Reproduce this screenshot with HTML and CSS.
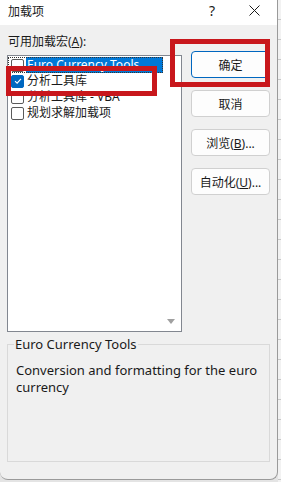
FILE: index.html
```html
<!DOCTYPE html>
<html lang="zh-CN">
<head>
    <meta charset="UTF-8">
    <meta name="viewport" content="width=device-width, initial-scale=1.0">
    <title>加载项</title>
    <link rel="stylesheet" href="styles.css">
</head>
<body>
    <div class="sheet"></div>
    <div class="dialog">
        <div class="titlebar">
            <span class="title">加载项</span>
            <span class="help">?</span>
            <span class="close">
                <svg width="11" height="11" viewBox="0 0 11 11"><path d="M0.5 0.5 L10.5 10.5 M10.5 0.5 L0.5 10.5" stroke="#1a1a1a" stroke-width="1" fill="none"/></svg>
            </span>
        </div>
        <div class="content">
            <div class="main">
                <div class="left">
                    <div class="label">可用加载宏(<u>A</u>):</div>
                    <div class="listbox">
                        <div class="item selected">
                            <span class="box"></span>
                            <span class="text">Euro Currency Tools</span>
                        </div>
                        <div class="item">
                            <span class="box checked">
                                <svg width="8" height="8" viewBox="0 0 8 8"><path d="M1 4.2 L3.1 6.2 L7 1.8" stroke="#fff" stroke-width="1.1" fill="none"/></svg>
                            </span>
                            <span class="text">分析工具库</span>
                        </div>
                        <div class="item">
                            <span class="box"></span>
                            <span class="text">分析工具库 - VBA</span>
                        </div>
                        <div class="item">
                            <span class="box"></span>
                            <span class="text">规划求解加载项</span>
                        </div>
                        <span class="arrow"></span>
                    </div>
                </div>
                <div class="buttons">
                    <button class="default">确定</button>
                    <button>取消</button>
                    <button>浏览(<u>B</u>)...</button>
                    <button>自动化(<u>U</u>)...</button>
                </div>
            </div>
            <fieldset class="desc">
                <legend>Euro Currency Tools</legend>
                <p>Conversion and formatting for the euro currency</p>
            </fieldset>
        </div>
        <div class="mark mark-list"></div>
        <div class="mark mark-ok"></div>
    </div>
</body>
</html>
```

FILE: styles.css
```css
body {
    margin: 0;
    width: 281px;
    height: 482px;
    background-color: #e4e4e4;
    font-family: "Noto Sans", "Noto Sans CJK SC", sans-serif;
    font-size: 12px;
    color: #1a1a1a;
    position: relative;
    overflow: hidden;
}
.sheet {
    position: absolute;
    left: 278px;
    top: 0;
    width: 3px;
    height: 482px;
    background: repeating-linear-gradient(#f2f2f2 0, #f2f2f2 19px, #c8c8c8 19px, #c8c8c8 20px);
}
.dialog {
    position: relative;
    width: 277px;
    height: 479px;
    background-color: #f0f0f0;
    border-right: 1px solid #9a9a9a;
    border-bottom: 1px solid #9a9a9a;
    border-radius: 0 0 8px 8px;
    display: flex;
    flex-direction: column;
}
.titlebar {
    height: 25px;
    background-color: #fff;
    display: flex;
    align-items: center;
    padding-left: 8px;
}
.title {
    flex: 1;
    font-size: 12px;
    margin-top: -4px;
}
.help {
    font-size: 14px;
    margin-right: 34px;
    margin-top: -4px;
}
.close {
    margin-right: 17px;
    margin-top: -4px;
    display: flex;
}
.content {
    padding: 0 7px;
    flex: 1;
    display: flex;
    flex-direction: column;
}
.main {
    display: flex;
    gap: 9px;
}
.left {
    width: 176px;
}
.label {
    height: 30px;
    line-height: 33px;
    padding-left: 1px;
}
.listbox {
    position: relative;
    height: 274px;
    background-color: #fff;
    border: 1px solid #828790;
    padding-top: 1px;
}
.item {
    display: flex;
    align-items: center;
    height: 16px;
    padding-left: 3px;
}
.box {
    width: 11px;
    height: 11px;
    border: 1px solid #5a5a5a;
    border-radius: 2px;
    background-color: #fff;
    display: flex;
    align-items: center;
    justify-content: center;
    margin-right: 2px;
}
.box.checked {
    background-color: #0067c0;
    border-color: #0067c0;
}
.text {
    padding: 0 1px;
    line-height: 16px;
}
.item.selected {
    outline: 1px dotted #333;
    outline-offset: -1px;
    margin-right: 18px;
}
.item.selected .text {
    background-color: #0078d7;
    color: #fff;
    flex: 1;
}
.arrow {
    position: absolute;
    right: 6px;
    bottom: 7px;
    border-left: 4px solid transparent;
    border-right: 4px solid transparent;
    border-top: 5px solid #a0a0a0;
}
.buttons {
    padding-top: 26px;
    display: flex;
    flex-direction: column;
    gap: 12px;
}
.buttons button {
    width: 79px;
    height: 27px;
    background-color: #fdfdfd;
    border: 1px solid #d0d0d0;
    border-radius: 4px;
    font-family: "Noto Sans", "Noto Sans CJK SC", sans-serif;
    font-size: 12px;
    color: #1a1a1a;
    padding: 0;
}
.buttons button.default {
    border-color: #0067c0;
}
.desc {
    margin: 3px 0 0;
    padding: 9px 8px 0;
    height: 127px;
    border: 1px solid #d9d9d9;
    border-radius: 0;
    box-sizing: border-box;
    font-size: 13px;
}
.desc legend {
    padding: 0 1px;
    margin-left: -2px;
}
.desc p {
    margin: 0;
    line-height: 17px;
}
.mark {
    position: absolute;
    border: 5px solid #c8171c;
    box-sizing: border-box;
}
.mark-list {
    left: 6px;
    top: 66px;
    width: 151px;
    height: 30px;
}
.mark-ok {
    left: 170px;
    top: 39px;
    width: 100px;
    height: 48px;
}
```
